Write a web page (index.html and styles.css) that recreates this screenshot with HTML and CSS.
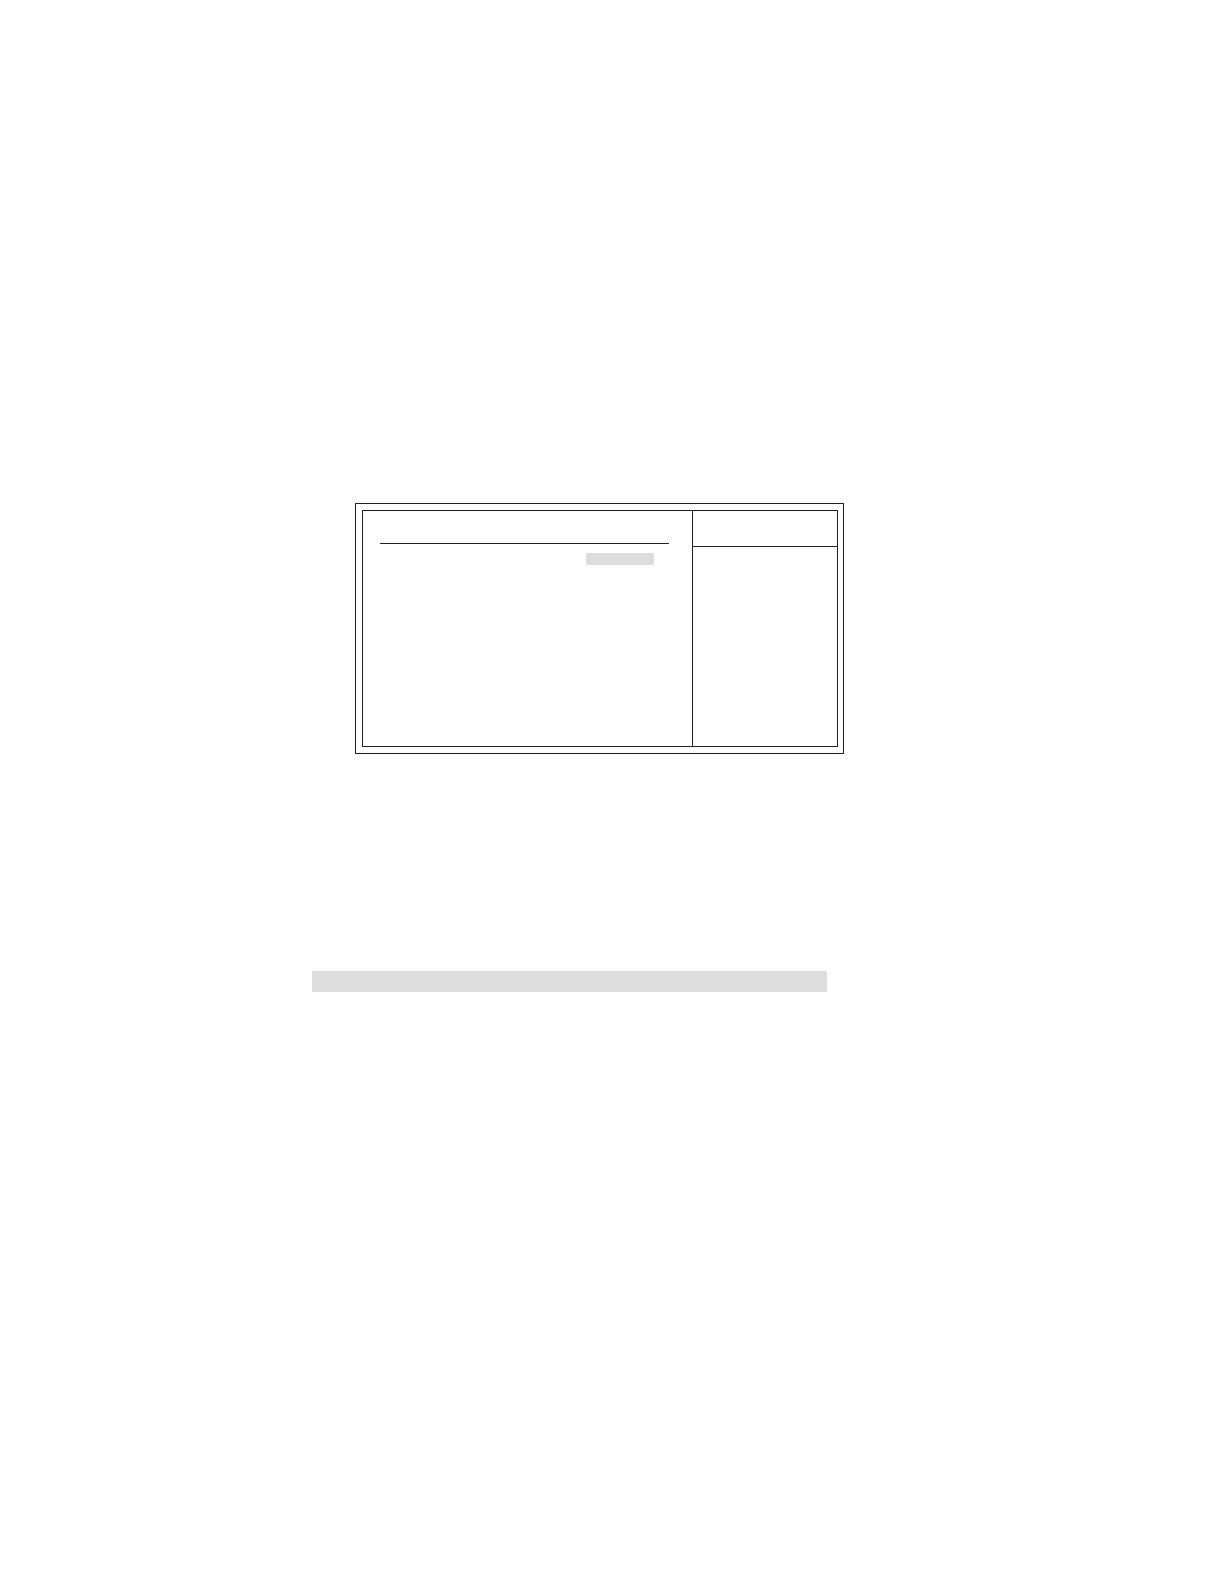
FILE: index.html
```
<!DOCTYPE html>
<html lang="en">
<head>
  <meta charset="utf-8">
  <meta name="viewport" content="width=device-width, initial-scale=1">
  <title>Setup screen</title>
  <link rel="stylesheet" href="styles.css">
</head>
<body>
  <main class="page">
    <div class="screen-row">
      <section class="screen">
        <div class="screen-inner">
          <div class="options">
            <hr class="options-rule">
            <div class="option-value"></div>
          </div>
          <aside class="help">
            <div class="help-header"></div>
          </aside>
        </div>
      </section>
    </div>
    <div class="band-row">
      <div class="band"></div>
    </div>
  </main>
</body>
</html>
```
FILE: styles.css
```
* {
  box-sizing: border-box;
}

body {
  margin: 0;
  background: #ffffff;
  font-family: "Liberation Sans", Arial, sans-serif;
}

.page {
  display: flex;
  flex-direction: column;
  gap: 217px;
  min-height: 100vh;
  padding-top: 503px;
}

.screen-row {
  display: grid;
  grid-template-columns: 355fr 489fr 380fr;
}

.screen {
  grid-column: 2;
  padding: 6px 5px 6px 6px;
  border: 1px solid #231f20;
}

.screen-inner {
  display: grid;
  grid-template-columns: 329fr 145fr;
  min-height: 237px;
  border: 1px solid #231f20;
}

.options {
  display: flex;
  flex-direction: column;
  gap: 9px;
  padding: 32px 23px 0 17px;
}

.options-rule {
  width: 100%;
  margin: 0;
  border: 0;
  border-top: 1px solid #231f20;
}

.option-value {
  align-self: flex-end;
  width: 68px;
  height: 12px;
  margin-right: 15px;
  background: #dcdddd;
}

.help {
  border-left: 1px solid #231f20;
}

.help-header {
  height: 36px;
  border-bottom: 1px solid #231f20;
}

.band-row {
  display: grid;
  grid-template-columns: 312fr 515fr 397fr;
}

.band {
  grid-column: 2;
  height: 21px;
  background: #dcdddd;
}
```
